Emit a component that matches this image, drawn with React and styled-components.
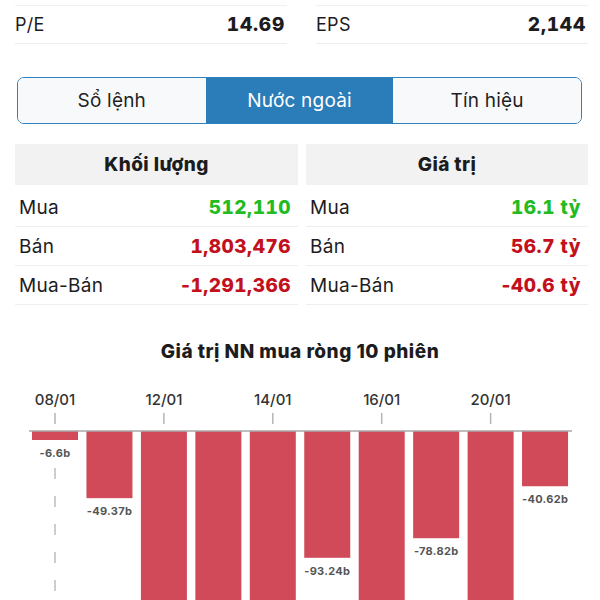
import React from "react";
import styled, { createGlobalStyle } from "styled-components";

const GlobalStyle = createGlobalStyle`
  body {
    margin: 0;
    background: #ffffff;
    font-family: Inter, "Noto Sans", "Liberation Sans", sans-serif;
    color: #1c1c1e;
  }
`;

const Page = styled.div`
  width: 600px;
  height: 600px;
  overflow: hidden;
`;

const StatsRow = styled.div`
  display: grid;
  grid-template-columns: 272px 272px;
  column-gap: 29px;
  padding: 5px 13px 0 15px;
`;

const StatCell = styled.div`
  display: flex;
  align-items: center;
  justify-content: space-between;
  height: 37px;
  border-top: 1px solid #f0f0f0;
  border-bottom: 1px solid #ededed;
  font-size: 18px;
  letter-spacing: 0.3px;
`;

const StatValue = styled.span`
  font-weight: 800;
  font-size: 19px;
  letter-spacing: 0.8px;
  font-variant-numeric: tabular-nums;
  margin-right: 2px;
`;

const Tabs = styled.div`
  display: grid;
  grid-template-columns: repeat(3, 1fr);
  margin: 33px 18px 0 17px;
  height: 47px;
  border: 1.5px solid #2f80bd;
  border-radius: 7px;
  overflow: hidden;
  box-sizing: border-box;
`;

const Tab = styled.div`
  display: flex;
  align-items: center;
  justify-content: center;
  font-size: 19px;
  letter-spacing: 0.2px;
  background: ${(p) => (p.$active ? "#2a7db9" : "#f8f9fa")};
  color: ${(p) => (p.$active ? "#ffffff" : "#1f1f1f")};
`;

const Tables = styled.div`
  display: grid;
  grid-template-columns: 283px 282px;
  column-gap: 8px;
  padding: 20px 12px 0 15px;
`;

const Table = styled.div`
  display: flex;
  flex-direction: column;
`;

const HeadCell = styled.div`
  height: 41px;
  display: flex;
  align-items: center;
  justify-content: center;
  background: #f2f2f2;
  font-size: 19px;
  font-weight: 800;
  letter-spacing: 0.4px;
  margin-bottom: 3px;
`;

const Row = styled.div`
  height: 38px;
  display: flex;
  align-items: center;
  justify-content: space-between;
  padding: 0 7px 0 4px;
  border-bottom: 1px solid #efefef;
  font-size: 19px;
  letter-spacing: 0.3px;
`;

const Num = styled.span`
  font-weight: 800;
  font-size: 19px;
  letter-spacing: 0.5px;
  color: ${(p) => (p.$up ? "#22bb22" : "#c2101c")};
`;

const Digits = styled.span`
  font-variant-numeric: tabular-nums;
`;

const ChartTitle = styled.div`
  margin-top: 35px;
  text-align: center;
  font-size: 19px;
  font-weight: 800;
  letter-spacing: 0.5px;
  line-height: 24px;
`;

const ChartBox = styled.div`
  margin-top: 7px;
  height: 240px;
`;

function Signed({ value, up }) {
  const neg = value.startsWith("-");
  return (
    <Num $up={up}>
      {neg && "-"}
      <Digits>{neg ? value.slice(1) : value}</Digits>
    </Num>
  );
}

const bars = [
  { d: "08/01", v: -6.6 },
  { v: -49.37 },
  { d: "12/01", v: -152.3 },
  { v: -147.8 },
  { d: "14/01", v: -160.1 },
  { v: -93.24 },
  { d: "16/01", v: -171.5 },
  { v: -78.82 },
  { d: "20/01", v: -166.4 },
  { v: -40.62 },
];

const AXIS = 60;
const SCALE = 1.36;
const HEIGHT = 240;

function NetChart() {
  return (
    <svg width="600" height={HEIGHT} viewBox={`0 0 600 ${HEIGHT}`}>
      <line x1="55" y1="97" x2="55" y2={HEIGHT} stroke="#bdbdbd" strokeWidth="1.5" strokeDasharray="11 17" />
      {bars.map((b, i) => {
        const x = 32 + i * 54.45;
        const cx = x + 23;
        const h = Math.abs(b.v) * SCALE;
        const labelY = AXIS + h + 17;
        return (
          <g key={i}>
            {b.d && (
              <>
                <text x={cx} y="34" textAnchor="middle" fontSize="15" fontWeight="500" fill="#333" fontFamily="Inter, sans-serif">
                  {b.d}
                </text>
                <line x1={cx} y1="42" x2={cx} y2="53" stroke="#b5b5b5" strokeWidth="1.5" />
              </>
            )}
            <rect x={x} y={AXIS} width="46" height={h} fill="#d14a5a" />
            {labelY < HEIGHT && (
              <text x={cx} y={labelY} textAnchor="middle" fontSize="11" fontWeight="700" fill="#555" fontFamily="Inter, sans-serif" letterSpacing="0.3">
                {b.v}b
              </text>
            )}
          </g>
        );
      })}
      <line x1="29" y1={AXIS} x2="572" y2={AXIS} stroke="#a8a8a8" strokeWidth="1.5" />
    </svg>
  );
}

export default function App() {
  return (
    <Page>
      <GlobalStyle />
      <StatsRow>
        <StatCell>
          <span>P/E</span>
          <StatValue>14.69</StatValue>
        </StatCell>
        <StatCell>
          <span>EPS</span>
          <StatValue>2,144</StatValue>
        </StatCell>
      </StatsRow>
      <Tabs>
        <Tab>Sổ lệnh</Tab>
        <Tab $active>Nước ngoài</Tab>
        <Tab>Tín hiệu</Tab>
      </Tabs>
      <Tables>
        <Table>
          <HeadCell>Khối lượng</HeadCell>
          <Row>
            <span>Mua</span>
            <Signed up value="512,110" />
          </Row>
          <Row>
            <span>Bán</span>
            <Signed value="1,803,476" />
          </Row>
          <Row>
            <span>Mua-Bán</span>
            <Signed value="-1,291,366" />
          </Row>
        </Table>
        <Table>
          <HeadCell>Giá trị</HeadCell>
          <Row>
            <span>Mua</span>
            <Signed up value="16.1 tỷ" />
          </Row>
          <Row>
            <span>Bán</span>
            <Signed value="56.7 tỷ" />
          </Row>
          <Row>
            <span>Mua-Bán</span>
            <Signed value="-40.6 tỷ" />
          </Row>
        </Table>
      </Tables>
      <ChartTitle>Giá trị NN mua ròng 10 phiên</ChartTitle>
      <ChartBox>
        <NetChart />
      </ChartBox>
    </Page>
  );
}
